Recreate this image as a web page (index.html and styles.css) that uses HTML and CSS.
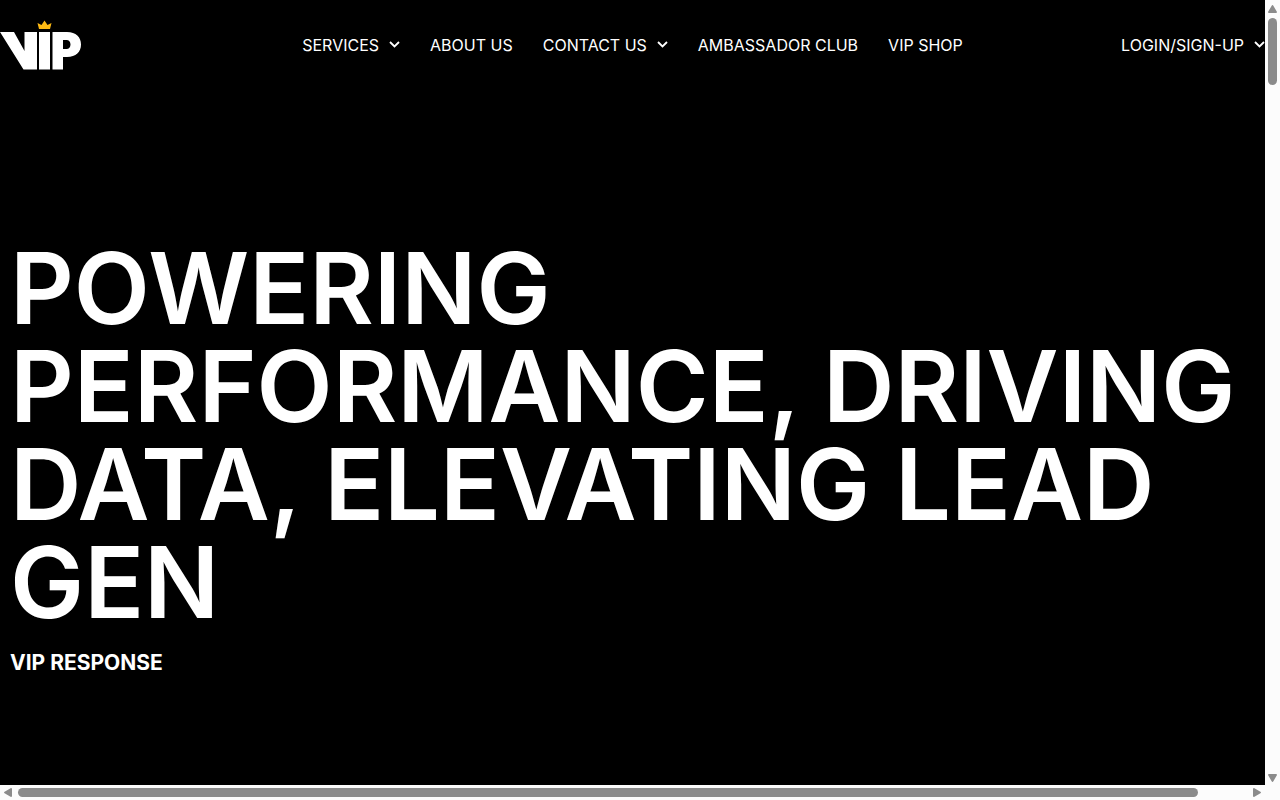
FILE: index.html
```html
<!DOCTYPE html>
<html lang="en">
<head>
<meta charset="utf-8">
<meta name="viewport" content="width=device-width, initial-scale=1">
<title>VIP Response</title>
<link rel="stylesheet" href="styles.css">
</head>
<body>
<div class="page">
  <header class="header">
    <a class="logo" href="#" aria-label="VIP Response home">
      <svg width="82" height="50" viewBox="0 0 82 50" aria-hidden="true">
        <path fill="#fff" d="M0 12H14L24.500 31V12H37V49.500H23.500ZM39 12H50V49.500H39ZM52.500 12H67C76 12 81 17 81 24.500S76 37 67 37H63V49.500H52.500ZM63 20V29H66.500C69 29 70.500 27 70.500 24.500S69 20 66.500 20Z"/>
        <path fill="#fdb913" d="M37.500 3 41.500 5 44.500 0.500 47.500 5 51.500 3 50 9H39Z"/>
      </svg>
    </a>
    <nav class="nav" aria-label="Main">
      <button class="nav-item" type="button">SERVICES <svg class="chevron" viewBox="0 0 11 9" aria-hidden="true"><path d="M1 1 5.500 5.500 10 1"/></svg></button>
      <a class="nav-item" href="#">ABOUT US</a>
      <button class="nav-item" type="button">CONTACT US <svg class="chevron" viewBox="0 0 11 9" aria-hidden="true"><path d="M1 1 5.500 5.500 10 1"/></svg></button>
      <a class="nav-item" href="#">AMBASSADOR CLUB</a>
      <a class="nav-item" href="#">VIP SHOP</a>
    </nav>
    <button class="nav-item login" type="button">LOGIN/SIGN-UP <svg class="chevron" viewBox="0 0 11 9" aria-hidden="true"><path d="M1 1 5.500 5.500 10 1"/></svg></button>
  </header>
  <main class="hero">
    <h1 class="title">POWERING<br>PERFORMANCE, DRIVING<br>DATA, ELEVATING LEAD<br>GEN</h1>
    <p class="subtitle">VIP RESPONSE</p>
  </main>
</div>
<div class="bar bar-vertical" aria-hidden="true">
  <svg class="arrow" viewBox="0 0 9 8"><path d="M4.500 0Q5 0 5.500 1L9 7Q9 8 8 8H1Q0 8 0 7L3.500 1Q4 0 4.500 0Z"/></svg>
  <div class="track"><div class="thumb"></div></div>
  <svg class="arrow" viewBox="0 0 9 8"><path d="M4.500 8Q4 8 3.500 7L0 1Q0 0 1 0H8Q9 0 9 1L5.500 7Q5 8 4.500 8Z"/></svg>
</div>
<div class="bar bar-horizontal" aria-hidden="true">
  <svg class="arrow-side" viewBox="0 0 8 9"><path d="M0 4.500Q0 4 1 3.500L7 0Q8 0 8 1V8Q8 9 7 9L1 5.500Q0 5 0 4.500Z"/></svg>
  <div class="track"><div class="thumb"></div></div>
  <svg class="arrow-side" viewBox="0 0 8 9"><path d="M8 4.500Q8 5 7 5.500L1 9Q0 9 0 8V1Q0 0 1 0L7 3.500Q8 4 8 4.500Z"/></svg>
</div>
</body>
</html>
```
FILE: styles.css
```css
* {
  box-sizing: border-box;
}

body {
  margin: 0;
  min-height: 100vh;
  display: grid;
  grid-template-columns: minmax(0, 1fr) 15px;
  grid-template-rows: 1fr 15px;
  background: #fcfcfc;
  color: #fff;
  font-family: Inter, "Liberation Sans", sans-serif;
}

.page {
  display: flex;
  flex-direction: column;
  background: #000;
}

.header {
  display: grid;
  grid-template-columns: 1fr auto 1fr;
  align-items: center;
  padding: 20px 0;
}

.logo,
.logo svg {
  display: block;
}

.logo {
  justify-self: start;
}

.nav {
  display: flex;
  gap: 30px;
}

.nav-item {
  display: flex;
  align-items: center;
  gap: 10px;
  padding: 0;
  border: 0;
  background: none;
  color: inherit;
  font: inherit;
  font-size: 16px;
  line-height: 24px;
  text-decoration: none;
  white-space: nowrap;
  cursor: pointer;
}

.login {
  justify-self: end;
}

.chevron {
  width: 11px;
  height: 9px;
  fill: none;
  stroke: #fff;
  stroke-width: 1.8;
}

.hero {
  flex: 1;
  display: flex;
  flex-direction: column;
  justify-content: center;
  padding: 43px 10px 0;
}

.title {
  margin: 0;
  font-size: 99px;
  font-weight: 600;
  line-height: 98px;
  white-space: nowrap;
}

.subtitle {
  margin: 16px 0 0;
  font-size: 21px;
  font-weight: 700;
  line-height: 32px;
}

.bar {
  display: flex;
  align-items: center;
  gap: 5px;
  background: #fcfcfc;
}

.bar-vertical {
  flex-direction: column;
  padding: 5px 0 3px;
}

.bar-horizontal {
  padding: 0 4px;
  gap: 6px;
}

.arrow {
  width: 9px;
  height: 8px;
  fill: #8b8b8b;
}

.arrow-side {
  width: 8px;
  height: 9px;
  fill: #8b8b8b;
}

.track {
  flex: 1;
}

.thumb {
  border-radius: 5px;
  background: #8b8b8b;
}

.bar-vertical .thumb {
  width: 9px;
  height: 67px;
}

.bar-horizontal .thumb {
  width: 96%;
  height: 9px;
}
```
